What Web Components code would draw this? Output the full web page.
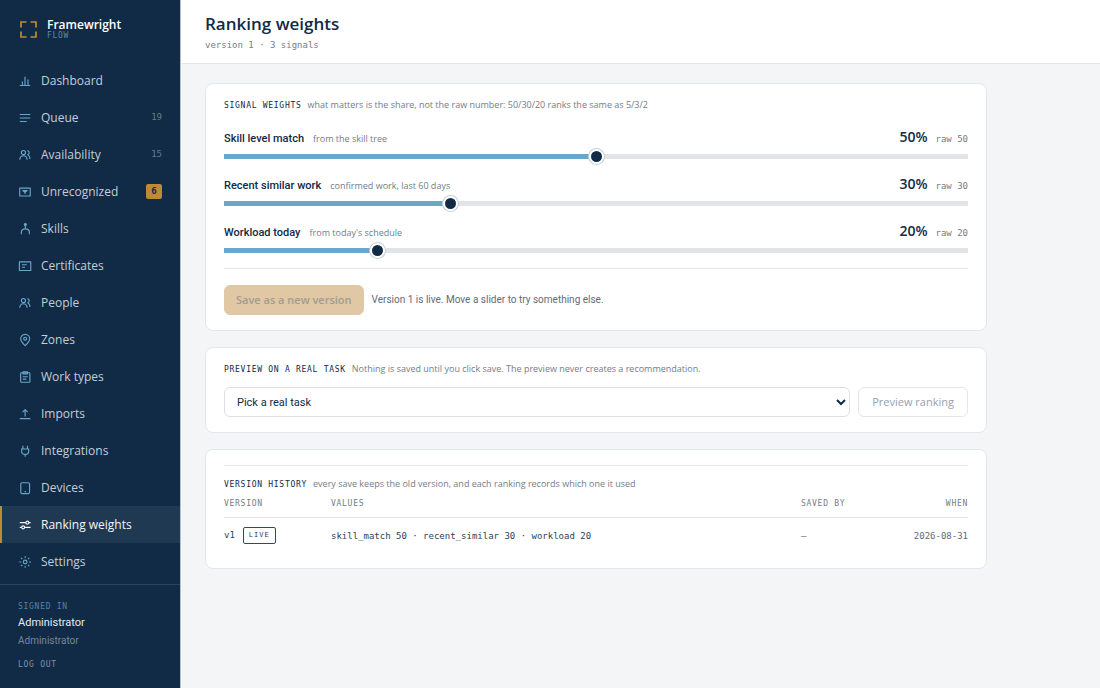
<!DOCTYPE html>
<html lang="en">
<head>
<meta charset="utf-8">
<meta name="viewport" content="width=device-width, initial-scale=1">
<title>Ranking weights · Framewright Flow</title>
<style>
  :root {
    --navy: #112a46;
    --navy-active: #203952;
    --amber: #bd8a36;
    --sky: #6aa6c9;
    --ink: #112a46;
    --muted: #737d89;
    --line: #e3e6ea;
    --page: #f3f5f7;
    --display: "Open Sans", sans-serif;
    --sans: Roboto, sans-serif;
    --hint: "Open Sans", sans-serif;
    --mono: "DejaVu Sans Mono", monospace;
    --track: 0.09em;
  }
  body { margin: 0; background: var(--page); color: var(--ink); font-family: var(--sans); font-size: 11px; }
</style>
</head>
<body>
<fw-app>
  <fw-sidebar slot="sidebar">
    <fw-nav-item icon="dashboard">Dashboard</fw-nav-item>
    <fw-nav-item icon="queue" count="19">Queue</fw-nav-item>
    <fw-nav-item icon="people" count="15">Availability</fw-nav-item>
    <fw-nav-item icon="unrecognized" count="6" alert>Unrecognized</fw-nav-item>
    <fw-nav-item icon="skills">Skills</fw-nav-item>
    <fw-nav-item icon="certificates">Certificates</fw-nav-item>
    <fw-nav-item icon="people">People</fw-nav-item>
    <fw-nav-item icon="zones">Zones</fw-nav-item>
    <fw-nav-item icon="work">Work types</fw-nav-item>
    <fw-nav-item icon="imports">Imports</fw-nav-item>
    <fw-nav-item icon="plug">Integrations</fw-nav-item>
    <fw-nav-item icon="devices">Devices</fw-nav-item>
    <fw-nav-item icon="ranking" active>Ranking weights</fw-nav-item>
    <fw-nav-item icon="settings">Settings</fw-nav-item>
  </fw-sidebar>
  <fw-page-header>
    Ranking weights
    <span slot="sub">version 1 · 3 signals</span>
  </fw-page-header>
  <fw-content>
    <fw-card heading="Signal weights" hint="what matters is the share, not the raw number: 50/30/20 ranks the same as 5/3/2">
      <fw-weights-form></fw-weights-form>
    </fw-card>
    <fw-card heading="Preview on a real task" hint="Nothing is saved until you click save. The preview never creates a recommendation.">
      <fw-preview-form></fw-preview-form>
    </fw-card>
    <fw-card ruled heading="Version history" hint="every save keeps the old version, and each ranking records which one it used">
      <fw-version-table></fw-version-table>
    </fw-card>
  </fw-content>
</fw-app>

<script>
const define = (name, render, setup) => {
  customElements.define(name, class extends HTMLElement {
    connectedCallback() {
      if (this.shadowRoot) return;
      const root = this.attachShadow({ mode: 'open' });
      root.innerHTML = '<style>*{box-sizing:border-box}</style>' + render(this);
      if (setup) setup(this, root);
    }
  });
};

const ICONS = {
  dashboard: '<path d="M2 13.2h12M5 13V8.5M8 13V3M11.4 13V6.2"/>',
  queue: '<path d="M2 4h12M2 8h12M2 12h8"/>',
  people: '<circle cx="6.2" cy="5.2" r="2.4"/><path d="M2 13.5c.2-3 1.800-4.600 4.200-4.600s4 1.600 4.200 4.600M10.800 3c1.300.3 2 1.200 2 2.300s-.7 1.900-1.600 2.300c1.300.8 2 1.900 2.200 3.200l.2 1.800"/>',
  unrecognized: '<rect x="2" y="3.600" width="12" height="9"/><path d="M5.500 6.400h5L8 8.400zM8 7v3.300"/>',
  skills: '<circle cx="8.400" cy="2.800" r="1.100" fill="currentColor"/><path d="M8.400 3.500v4.200M3.800 14v-2.200c0-2.600 1.800-4 4.600-4s4.600 1.400 4.600 4V14"/>',
  certificates: '<rect x="1.600" y="3.300" width="13" height="9.800"/><path d="M4.500 6.600h5.500M4.500 9.400h3.500"/>',
  zones: '<path d="M8.200 14.500C5 11.600 3 9.300 3 6.700a5.200 5.200 0 0 1 10.400 0c0 2.600-2 4.900-5.200 7.800z"/><circle cx="8.200" cy="6.500" r="1.700"/>',
  work: '<rect x="3" y="3.200" width="10.600" height="10.800" rx="1"/><path d="M5.800 2.200h5v2.300h-5zM5.500 7.700h5.600M5.500 10.500h4"/>',
  imports: '<path d="M2 13.300h12.200M8.100 10.800V3M5.200 5.800l2.900-2.900L11 5.800"/>',
  plug: '<path d="M5.600 2v3.500M10.800 2v3.500M3.500 5.700h9.400M4.200 5.700v2.500c0 2.300 1.600 3.700 4 3.700s4-1.400 4-3.700V5.700M8.200 12v2.600"/>',
  devices: '<rect x="3.200" y="2" width="10" height="12.400" rx="1.500"/><path d="M7.500 12.200h1.600"/>',
  ranking: '<path d="M2 5.300h7M12.400 5.300H14.400M2 10.700h2.200M7.600 10.700h6.800"/><circle cx="10.700" cy="5.300" r="1.700"/><circle cx="5.900" cy="10.700" r="1.700"/>',
  settings: '<circle cx="8.200" cy="8" r="2.100"/><path d="M8.200 1.300v2.200M8.200 12.500v2.200M1.500 8h2.200M12.700 8h2.200M3.500 3.300l1.500 1.500M11.400 11.200l1.500 1.500M3.500 12.700l1.500-1.500M11.400 4.800l1.500-1.500"/>'
};

define('fw-app', () => `
  <style>
    :host { display: flex; min-height: 100vh; }
    ::slotted([slot=sidebar]) { flex: none; }
    main { flex: 1; min-width: 0; }
  </style>
  <slot name="sidebar"></slot>
  <main><slot></slot></main>`);

define('fw-sidebar', () => `
  <style>
    :host { display: flex; flex-direction: column; box-sizing: border-box; width: 181px; background: var(--navy); border-right: 1px solid #b7c2cd; color: #fff; }
    .brand { display: flex; align-items: center; gap: 10px; padding: 18px 20px 0; margin-bottom: 21px; }
    .brand svg { width: 17px; height: 17px; color: var(--amber); }
    .name { font: 600 12px/13px var(--display); }
    .product { font: 8px/10px var(--mono); letter-spacing: var(--track); color: #5d88aa; }
    nav { display: flex; flex-direction: column; margin-bottom: 4px; }
    footer { margin-top: auto; border-top: 1px solid #294560; padding: 17px 18px 17px; }
    .cap { font: 8px/10px var(--mono); letter-spacing: var(--track); color: #5484a8; }
    .who { font: 11px/16px var(--sans); margin-top: 3px; color: #e7ecf1; }
    .role { font: 10px/16px var(--sans); margin-top: 2px; color: #76879a; }
    a { display: inline-block; margin-top: 9px; font: 8px/14px var(--mono); letter-spacing: var(--track); color: #8292a3; text-decoration: none; }
  </style>
  <div class="brand">
    <svg viewBox="0 0 17 17" fill="none" stroke="currentColor" stroke-width="1.700" aria-hidden="true"><path d="M1 6.500V1h5.500M10.500 1H16v5.500M16 10.500V16h-5.500M6.500 16H1v-5.500"/></svg>
    <div><div class="name">Framewright</div><div class="product">FLOW</div></div>
  </div>
  <nav aria-label="Main"><slot></slot></nav>
  <footer>
    <div class="cap">SIGNED IN</div>
    <div class="who">Administrator</div>
    <div class="role">Administrator</div>
    <a href="#logout">LOG OUT</a>
  </footer>`);

define('fw-nav-item', el => `
  <style>
    :host { display: block; }
    a { display: flex; align-items: center; gap: 9px; height: 37px; padding: 0 18px 0 16px; border-left: 2px solid transparent; color: #c5ced7; font: 500 12px/16px var(--display); text-decoration: none; }
    svg { width: 14px; height: 14px; flex: none; color: var(--sky); }
    .label { flex: 1; white-space: nowrap; }
    .count { font: 9px/15px var(--mono); color: #667c92; }
    :host([alert]) .count { min-width: 16px; border-radius: 2px; background: var(--amber); color: var(--navy); text-align: center; font-weight: 700; }
    :host([active]) a { background: var(--navy-active); border-left-color: var(--amber); color: #f4f6f8; }
    :host([active]) svg { color: #f4f6f8; }
  </style>
  <a href="#${el.getAttribute('icon')}" ${el.hasAttribute('active') ? 'aria-current="page"' : ''}>
    <svg viewBox="0 0 16 16" fill="none" stroke="currentColor" stroke-width="1.300" stroke-linejoin="round" aria-hidden="true">${ICONS[el.getAttribute('icon')]}</svg>
    <span class="label"><slot></slot></span>
    ${el.hasAttribute('count') ? `<span class="count">${el.getAttribute('count')}</span>` : ''}
  </a>`);

define('fw-page-header', () => `
  <style>
    :host { display: block; background: #fff; border-bottom: 1px solid var(--line); padding: 12px 24px 12px; }
    h1 { margin: 0; font: 600 17px/24px var(--display); }
    p { margin: 3px 0 0; font: 9px/12px var(--mono); color: var(--muted); }
  </style>
  <h1><slot></slot></h1>
  <p><slot name="sub"></slot></p>`);

define('fw-content', () => `
  <style>
    :host { display: flex; flex-direction: column; gap: 16px; padding: 19px 24px; max-width: 782px; }
  </style>
  <slot></slot>`);

define('fw-card', el => `
  <style>
    :host { display: block; background: #fff; border: 1px solid var(--line); border-radius: 8px; padding: 15px 18px; }
    header { display: flex; align-items: baseline; gap: 6px; height: 12px; }
    :host([ruled]) header { box-sizing: content-box; border-top: 1px solid var(--line); padding-top: 12px; }
    h2 { margin: 0; font: 400 8px/12px var(--mono); letter-spacing: var(--track); text-transform: uppercase; white-space: nowrap; color: var(--ink); }
    p { margin: 0; font: 9px/12px var(--hint); color: var(--muted); }
  </style>
  <header><h2>${el.getAttribute('heading')}</h2><p>${el.getAttribute('hint')}</p></header>
  <slot></slot>`);

define('fw-button', el => `
  <style>
    :host { display: block; flex: none; }
    button { display: block; height: 30px; padding: 0 13px; border: 1px solid var(--line); border-radius: 6px; background: #fff; color: #979fab; font: 500 11px/16px var(--display); white-space: nowrap; }
    :host([primary]) button { padding: 0 11px; border-color: #dfc8a3; background: #dfc8a3; color: #a39c90; font-weight: 600; }
  </style>
  <button type="button" disabled><slot></slot></button>`);

define('fw-weight-slider', el => `
  <style>
    :host { display: block; }
    .head { display: flex; align-items: baseline; height: 21px; }
    label { font: 500 11px/18px var(--sans); }
    .note { margin-left: 9px; flex: 1; font: 9px/18px var(--hint); color: var(--muted); }
    output { font: 600 14px/18px var(--display); }
    .raw { margin-left: 8px; font: 9px/18px var(--mono); color: var(--muted); }
    input { display: block; appearance: none; width: 100%; height: 15px; margin: 0; background: transparent; }
    input::-webkit-slider-runnable-track { height: 5px; background: linear-gradient(to right, var(--sky) var(--share), #e2e4e7 var(--share)); }
    input::-webkit-slider-thumb { appearance: none; box-sizing: border-box; width: 15px; height: 15px; margin-top: -5px; border: 2px solid #fff; border-radius: 50%; background: var(--navy); box-shadow: 0 0 0 1px #c3d0dc; }
  </style>
  <div class="head">
    <label for="range">${el.getAttribute('label')}</label>
    <span class="note">${el.getAttribute('note')}</span>
    <output for="range">${el.getAttribute('value')}%</output>
    <span class="raw">raw ${el.getAttribute('value')}</span>
  </div>
  <input id="range" type="range" min="0" max="100" value="${el.getAttribute('value')}">`,
  (el, root) => {
    const input = root.querySelector('input');
    const sync = () => input.style.setProperty('--share', input.value + '%');
    input.addEventListener('input', () => {
      sync();
      root.querySelector('.raw').textContent = 'raw ' + input.value;
    });
    sync();
  });

define('fw-weights-form', () => `
  <style>
    :host { display: block; }
    .sliders { display: flex; flex-direction: column; gap: 11px; padding: 17px 0 10px; border-bottom: 1px solid var(--line); }
    .actions { display: flex; align-items: center; gap: 8px; padding-top: 16px; }
    p { margin: 0; font: 10px/16px var(--sans); color: #5f6b79; }
  </style>
  <div class="sliders">
    <fw-weight-slider label="Skill level match" note="from the skill tree" value="50"></fw-weight-slider>
    <fw-weight-slider label="Recent similar work" note="confirmed work, last 60 days" value="30"></fw-weight-slider>
    <fw-weight-slider label="Workload today" note="from today's schedule" value="20"></fw-weight-slider>
  </div>
  <div class="actions">
    <fw-button primary>Save as a new version</fw-button>
    <p>Version 1 is live. Move a slider to try something else.</p>
  </div>`);

define('fw-preview-form', () => `
  <style>
    :host { display: flex; align-items: center; gap: 8px; padding-top: 12px; }
    select { flex: 1; min-width: 0; height: 30px; padding: 0 0 0 8px; border: 1px solid #dcdfe4; border-radius: 6px; background: #fff; color: var(--ink); font: 11px/16px var(--sans); }
  </style>
  <select aria-label="Task"><option>Pick a real task</option></select>
  <fw-button>Preview ranking</fw-button>`);

define('fw-version-table', () => `
  <style>
    :host { display: block; padding-top: 8px; }
    table { width: 100%; table-layout: fixed; border-collapse: separate; border-spacing: 0; }
    th, td { padding: 0; text-align: left; }
    th { padding-bottom: 7px; border-bottom: 1px solid var(--line); font: 8px/12px var(--mono); letter-spacing: var(--track); color: var(--muted); }
    td { height: 35px; font: 9px/16px var(--mono); color: #2d4158; }
    .version { width: 107px; }
    .by { width: 90px; }
    .when { width: 77px; text-align: right; }
    td.by, td.when { color: #5f6b79; }
    .tag { display: inline-block; margin-left: 8px; padding: 0 5px; border: 1px solid #34485f; border-radius: 2px; font-size: 7px; line-height: 15px; letter-spacing: 1px; vertical-align: middle; }
  </style>
  <table>
    <thead><tr><th class="version">VERSION</th><th>VALUES</th><th class="by">SAVED BY</th><th class="when">WHEN</th></tr></thead>
    <tbody><tr><td>v1<span class="tag">LIVE</span></td><td>skill_match 50 · recent_similar 30 · workload 20</td><td class="by">—</td><td class="when">2026-08-31</td></tr></tbody>
  </table>`);
</script>
</body>
</html>
